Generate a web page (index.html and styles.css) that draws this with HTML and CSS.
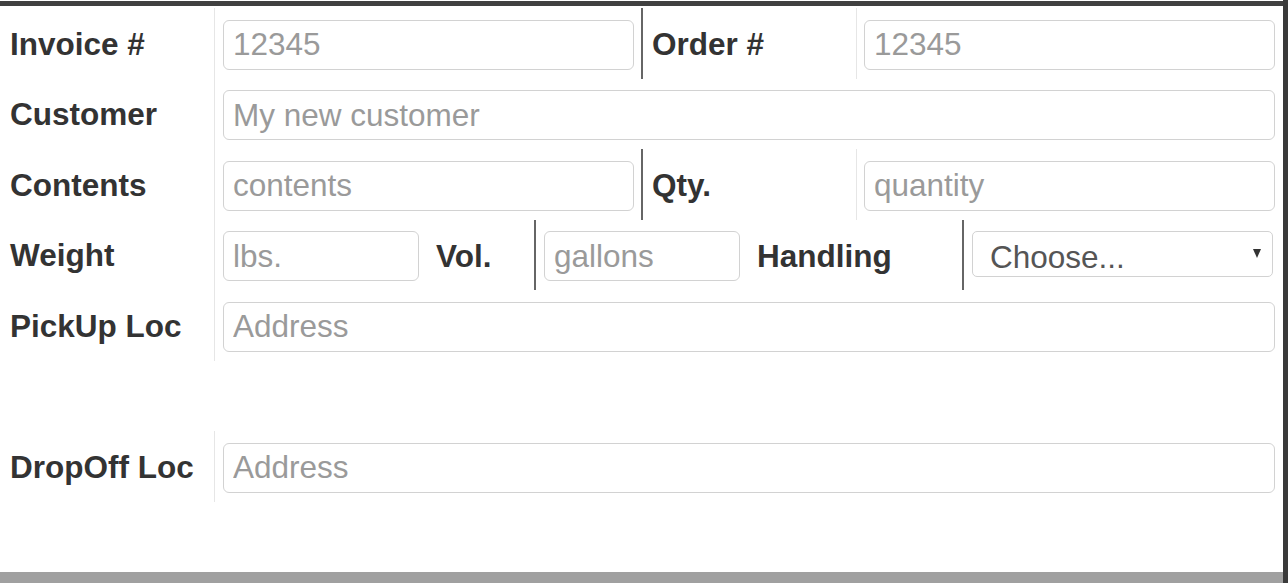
FILE: index.html
```html
<!DOCTYPE html>
<html lang="en">
<head>
    <meta charset="UTF-8">
    <title>Shipment Entry</title>
    <link rel="stylesheet" href="styles.css">
</head>
<body>
    <div class="page">
        <form class="shipment">
            <div class="row row-split">
                <div class="label">Invoice #</div>
                <div class="field"><input type="text" placeholder="12345"></div>
                <div class="label sep-dark">Order #</div>
                <div class="field field-right"><input type="text" placeholder="12345"></div>
            </div>

            <div class="row row-wide">
                <div class="label">Customer</div>
                <div class="field"><input type="text" placeholder="My new customer"></div>
            </div>

            <div class="row row-split">
                <div class="label">Contents</div>
                <div class="field"><input type="text" placeholder="contents"></div>
                <div class="label sep-dark">Qty.</div>
                <div class="field field-right"><input type="text" placeholder="quantity"></div>
            </div>

            <div class="row row-measure">
                <div class="label">Weight</div>
                <div class="field inline">
                    <input type="text" class="small" placeholder="lbs.">
                    <span class="inline-label">Vol.</span>
                </div>
                <div class="field inline sep-dark">
                    <input type="text" class="small" placeholder="gallons">
                    <span class="inline-label">Handling</span>
                </div>
                <div class="field sep-dark select-cell">
                    <div class="select-wrap">
                        <select>
                            <option>Choose...</option>
                            <option>Fragile</option>
                            <option>Refrigerated</option>
                        </select>
                    </div>
                </div>
            </div>

            <div class="row row-wide">
                <div class="label">PickUp Loc</div>
                <div class="field"><input type="text" placeholder="Address"></div>
            </div>

            <div class="row row-empty"></div>

            <div class="row row-wide">
                <div class="label">DropOff Loc</div>
                <div class="field"><input type="text" placeholder="Address"></div>
            </div>
        </form>
        <div class="bar"></div>
    </div>
</body>
</html>
```

FILE: styles.css
```css
html, body {
    margin: 0;
    padding: 0;
    background: #fff;
}
body {
    font-family: "Liberation Sans", Arial, sans-serif;
    font-size: 31.5px;
    color: #333;
}
.page {
    width: 1288px;
    height: 583px;
    box-sizing: border-box;
    border-right: 5px solid #3a3a3a;
    display: flex;
    flex-direction: column;
}
.shipment {
    flex: 1;
    margin-top: 1px;
    border-top: 5px solid #404040;
    padding-top: 2px;
}
.row {
    display: grid;
    height: 70.5px;
}
.row-split {
    grid-template-columns: 214px 427px 215px 1fr;
}
.row-wide {
    grid-template-columns: 214px 1fr;
}
.row-measure {
    grid-template-columns: 214px 320px 428px 1fr;
}
.label {
    display: flex;
    align-items: center;
    padding-left: 10px;
    padding-top: 2px;
    font-weight: bold;
    color: #333;
    white-space: nowrap;
}
.field {
    border-left: 1px solid #e6e6e6;
    padding: 11.5px 8px 0 8px;
}
.row-split .field {
    padding-right: 7px;
}
.row-split .field-right {
    padding-left: 7px;
    padding-right: 8px;
}
.sep-dark {
    border-left: 2px solid #666;
}
.label.sep-dark {
    padding-left: 9px;
}
.field.sep-dark {
    padding-left: 8px;
}
input {
    width: 100%;
    height: 50px;
    box-sizing: border-box;
    border: 1px solid #d2d2d2;
    border-radius: 6px;
    padding: 0 9px;
    font-family: inherit;
    font-size: 31.5px;
    color: #555;
    background: #fff;
    outline: none;
}
input::placeholder {
    color: #9a9a9a;
}
.inline {
    display: flex;
    align-items: flex-start;
}
.inline input.small {
    width: 196px;
    flex: none;
}
.inline-label {
    margin-left: 17px;
    height: 50px;
    display: flex;
    align-items: center;
    font-weight: bold;
    white-space: nowrap;
}
.select-cell {
    padding: 11.5px 10px 0 7px;
}
.select-wrap {
    position: relative;
}
.select-wrap::after {
    content: "";
    position: absolute;
    right: 12px;
    top: 18px;
    border-left: 4.5px solid transparent;
    border-right: 4.5px solid transparent;
    border-top: 9px solid #333;
    pointer-events: none;
}
select {
    width: 100%;
    height: 46px;
    box-sizing: border-box;
    border: 1px solid #d2d2d2;
    border-radius: 5px;
    padding: 5px 0 0 17px;
    font-family: inherit;
    font-size: 31.5px;
    color: #555;
    background: #fff;
    appearance: none;
    -webkit-appearance: none;
    outline: none;
}
.row-empty {
    display: block;
}
.bar {
    height: 11px;
    background: #a0a0a0;
}
```
